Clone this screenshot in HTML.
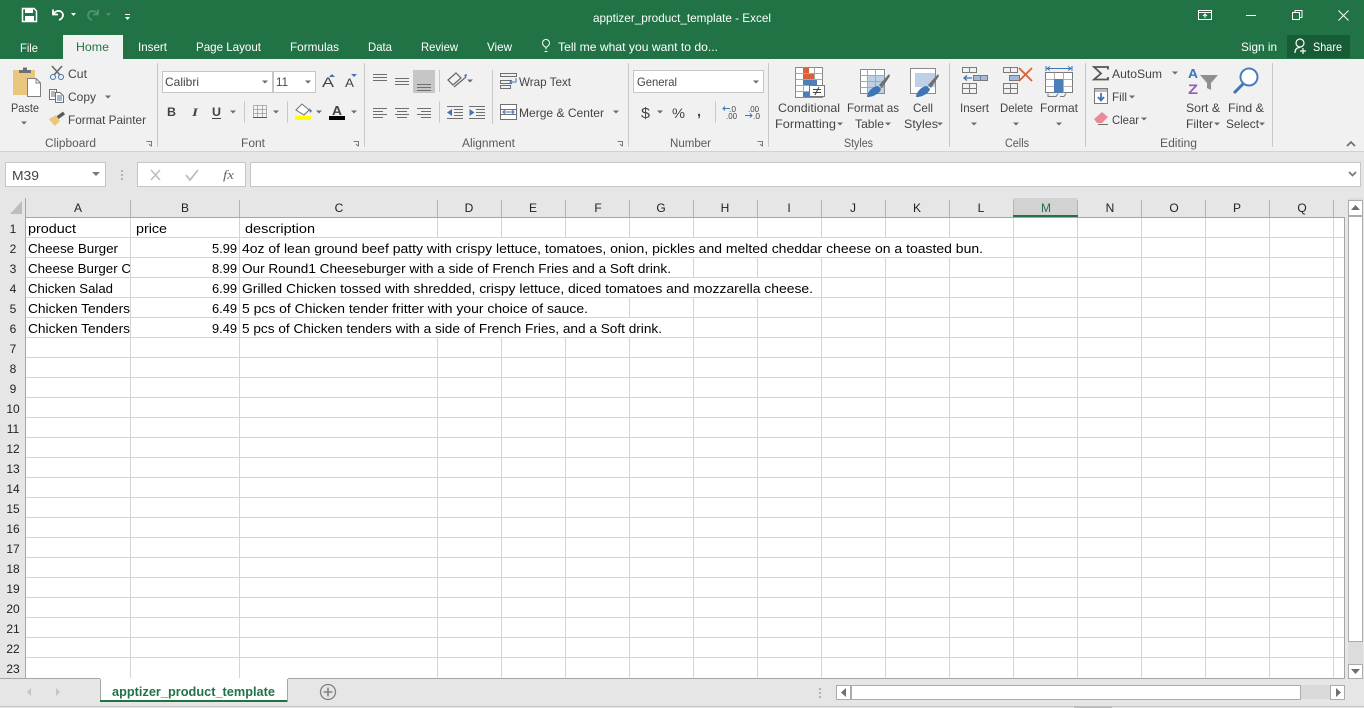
<!DOCTYPE html>
<html><head><meta charset="utf-8"><title>apptizer_product_template - Excel</title>
<style>
html,body{margin:0;padding:0;width:1364px;height:708px;overflow:hidden;background:#e6e6e6}
svg{display:block;position:absolute;left:0;top:0}
text{font-family:"Liberation Sans",sans-serif;font-size:12px;fill:#444;white-space:pre}
.w{fill:#fff}
.c{font-size:13px;fill:#000}
.h{font-size:12px;fill:#222;text-anchor:middle}
.g{font-size:11.5px;fill:#5a5a5a}
.ln{stroke:#6f6f6f;stroke-width:1;fill:none}
.bl{stroke:#3f75b3;stroke-width:1;fill:none}
</style></head><body>
<svg width="1364" height="708" viewBox="0 0 1364 708" lengthAdjust="spacingAndGlyphs">
<defs><clipPath id="colA"><rect x="26" y="218" width="104" height="120"/></clipPath>
<polygon id="ar" points="-3,-1.5 3,-1.5 0,1.5" fill="#6a6a6a"/></defs>

<!-- title bar -->
<rect width="1364" height="59" fill="#217346"/>
<rect x="63" y="35" width="60" height="24" fill="#f1f1f1"/>
<text class="w" x="593" y="22" textLength="178" lengthAdjust="spacingAndGlyphs">apptizer_product_template - Excel</text>
<path d="M22.500 8.500H34l2.500 2.500V21.500H22.500Z" fill="none" stroke="#fff" stroke-width="1.500"/><rect x="25" y="8.500" width="8" height="4.500" fill="#fff"/><rect x="25" y="16" width="9" height="5" fill="#fff"/>
<path d="M53 9.500V14.500H58M53.500 14C55.500 10.500 60 10 62 12.500C64 15 63 18.500 59 20" fill="none" stroke="#fff" stroke-width="1.800"/>
<polygon points="71,13 76,13 73.500,16" fill="#fff"/>
<path d="M98 9.500V14.500H93M97.500 14C95.500 10.500 91 10 89 12.500C87 15 88 18.500 92 20" fill="none" stroke="#4f9270" stroke-width="1.800"/>
<polygon points="106,13 111,13 108.500,16" fill="#4f9270"/>
<path d="M125 14.500H130" stroke="#fff"/><polygon points="125,17 130,17 127.500,20" fill="#fff"/>
<g fill="none" stroke="#fff"><rect x="1198.500" y="10.500" width="13" height="9"/><path d="M1198.500 12.500H1211.500M1205 18V14M1203 16L1205 14L1207 16"/>
<path d="M1246 15.500H1256" stroke-width="1"/>
<rect x="1292.500" y="12.500" width="7" height="7"/><path d="M1295 12V10.500H1302V17.500H1300"/>
<path d="M1338.500 10.500L1348.500 20.500M1348.500 10.500L1338.500 20.500"/></g>

<text class="w" x="20" y="52" textLength="18" lengthAdjust="spacingAndGlyphs">File</text>
<text x="76" y="51" textLength="33" lengthAdjust="spacingAndGlyphs" style="fill:#217346">Home</text>
<text class="w" x="138" y="51" textLength="29" lengthAdjust="spacingAndGlyphs">Insert</text>
<text class="w" x="196" y="51" textLength="65" lengthAdjust="spacingAndGlyphs">Page Layout</text>
<text class="w" x="290" y="51" textLength="49" lengthAdjust="spacingAndGlyphs">Formulas</text>
<text class="w" x="368" y="51" textLength="24" lengthAdjust="spacingAndGlyphs">Data</text>
<text class="w" x="421" y="51" textLength="37" lengthAdjust="spacingAndGlyphs">Review</text>
<text class="w" x="487" y="51" textLength="25" lengthAdjust="spacingAndGlyphs">View</text>
<path d="M546 49.500V47.500C543.500 46 542.500 44.500 542.500 43C542.500 40.500 544.500 39.500 546 39.500C547.500 39.500 549.500 40.500 549.500 43C549.500 44.500 548.500 46 546 47.500M544.500 51.500H547.500" fill="none" stroke="#fff"/>
<text class="w" x="558" y="51" textLength="160" lengthAdjust="spacingAndGlyphs">Tell me what you want to do...</text>
<text class="w" x="1241" y="51" textLength="36" lengthAdjust="spacingAndGlyphs">Sign in</text>
<rect x="1287" y="35" width="63" height="23" fill="#185c37"/>
<circle cx="1300" cy="43" r="4" fill="none" stroke="#fff" stroke-width="1.200"/><path d="M1295 53C1295 49 1297 47.500 1300 47.500M1300 51H1306M1303 48V54" fill="none" stroke="#fff" stroke-width="1.200"/>
<text class="w" x="1313" y="51" textLength="29" lengthAdjust="spacingAndGlyphs">Share</text>

<!-- ribbon -->
<rect y="59" width="1364" height="92" fill="#f1f1f1"/>
<rect y="151" width="1364" height="1" fill="#d2d2d2"/>
<g fill="#c9c9c9"><rect x="157" y="63" width="1" height="84"/><rect x="364" y="63" width="1" height="84"/><rect x="628" y="63" width="1" height="84"/><rect x="768" y="63" width="1" height="84"/><rect x="949" y="63" width="1" height="84"/><rect x="1085" y="63" width="1" height="84"/><rect x="1272" y="63" width="1" height="84"/></g>
<g class="g">
<text class="g" x="45" y="147" textLength="51" lengthAdjust="spacingAndGlyphs">Clipboard</text>
<text class="g" x="241" y="147" textLength="24" lengthAdjust="spacingAndGlyphs">Font</text>
<text class="g" x="462" y="147" textLength="53" lengthAdjust="spacingAndGlyphs">Alignment</text>
<text class="g" x="670" y="147" textLength="41" lengthAdjust="spacingAndGlyphs">Number</text>
<text class="g" x="844" y="147" textLength="29" lengthAdjust="spacingAndGlyphs">Styles</text>
<text class="g" x="1005" y="147" textLength="24" lengthAdjust="spacingAndGlyphs">Cells</text>
<text class="g" x="1160" y="147" textLength="37" lengthAdjust="spacingAndGlyphs">Editing</text>
</g>
<g fill="none" stroke="#7a7a7a"><path id="dl" d="M146.500 141.500H151.500V146.500M149 144L151 146"/><path d="M353.500 141.500H358.500V146.500M356 144L358 146"/><path d="M617.500 141.500H622.500V146.500M620 144L622 146"/><path d="M757.500 141.500H762.500V146.500M760 144L762 146"/></g>
<path d="M1347 146L1351 142L1355 146" fill="none" stroke="#6a6a6a" stroke-width="1.600"/>

<!-- clipboard -->
<rect x="13" y="70" width="22" height="25" fill="#eac77f"/>
<path d="M19 73V70H23V67.500H27V70H31V73Z" fill="#6f6f6f"/>
<path d="M27.500 78.500H36L40.500 83V96.500H27.500Z" fill="#fff" stroke="#7f7f7f"/><path d="M36 78.500V83H40.500" fill="none" stroke="#7f7f7f"/>
<text x="11" y="112" textLength="28" lengthAdjust="spacingAndGlyphs">Paste</text>
<use href="#ar" x="24" y="123"/>
<path d="M52 66L60 75M62 66L54 75" stroke="#6a6a6a" stroke-width="1.600"/><circle cx="53" cy="77" r="2.500" class="bl" stroke-width="1.300"/><circle cx="61" cy="77" r="2.500" class="bl" stroke-width="1.300"/>
<text x="68" y="78" textLength="19" lengthAdjust="spacingAndGlyphs">Cut</text>
<rect x="49.500" y="89.500" width="7" height="10" fill="#fff" stroke="#6f6f6f"/><path d="M51 92H55M51 94H55M51 96H55" stroke="#6f6f6f"/><path d="M55.500 92.500H60L63.500 96V102.500H55.500Z" fill="#fff" stroke="#6f6f6f"/><path d="M57 96H62M57 98H62M57 100H62" stroke="#3f75b3"/>
<text x="68" y="101" textLength="28" lengthAdjust="spacingAndGlyphs">Copy</text>
<use href="#ar" x="108" y="97"/>
<path d="M57 118L64 113" stroke="#5a5a5a" stroke-width="3.500"/><path d="M49 119L56 115L60 121L55 126C53 124 51 122 49 119Z" fill="#eac77f"/>
<text x="68" y="124" textLength="78" lengthAdjust="spacingAndGlyphs">Format Painter</text>

<!-- font -->
<rect x="162.500" y="71.500" width="110" height="21" fill="#fff" stroke="#c6c6c6"/><rect x="273.500" y="71.500" width="42" height="21" fill="#fff" stroke="#c6c6c6"/>
<text x="165" y="86" textLength="34" lengthAdjust="spacingAndGlyphs">Calibri</text>
<text x="276" y="86" textLength="12" lengthAdjust="spacingAndGlyphs">11</text>
<use href="#ar" x="265" y="82"/><use href="#ar" x="308" y="82"/>
<text x="322" y="87" textLength="12" lengthAdjust="spacingAndGlyphs" style="font-size:14px">A</text><polygon points="329,77 335,77 332,74" fill="#3f75b3"/>
<text x="345" y="87" textLength="9" lengthAdjust="spacingAndGlyphs" style="font-size:12px">A</text><polygon points="351,74 357,74 354,77" fill="#3f75b3"/>
<text x="167" y="116" style="font-weight:bold;font-size:12px" textLength="9" lengthAdjust="spacingAndGlyphs">B</text>
<text x="192" y="116" style="font-style:italic;font-size:12px;font-family:'Liberation Serif',serif;font-weight:bold" textLength="6" lengthAdjust="spacingAndGlyphs">I</text>
<text x="212" y="116" style="font-weight:bold;font-size:12px" textLength="9" lengthAdjust="spacingAndGlyphs">U</text><rect x="212" y="118" width="9" height="1" fill="#444"/>
<use href="#ar" x="233" y="112"/><rect x="244" y="101" width="1" height="22" fill="#c9c9c9"/>
<path d="M253.500 105.500H266.500V117.500H253.500ZM253.500 109.500H266.500M253.500 113.500H266.500M257.500 105.500V117.500M262.500 105.500V117.500" fill="none" stroke="#777" stroke-dasharray="1 1"/><rect x="253" y="117" width="14" height="1" fill="#555"/>
<use href="#ar" x="276" y="112"/><rect x="287" y="101" width="1" height="22" fill="#c9c9c9"/>
<path d="M296 110L302 104L309 110L304 115Z" fill="#fff" stroke="#6f6f6f"/><path d="M309 108L312 111L310 113Z" fill="#3f75b3"/>
<rect x="295" y="116" width="16" height="4" fill="#ff0"/><use href="#ar" x="319" y="112"/>
<text x="332" y="115" style="font-size:13px;font-weight:bold" textLength="10" lengthAdjust="spacingAndGlyphs">A</text>
<rect x="329" y="116" width="16" height="4" fill="#000"/><use href="#ar" x="354" y="112"/>

<!-- alignment -->
<rect x="413" y="70" width="22" height="23" fill="#c6c6c6"/>
<path class="ln" d="M373 74.500H387M373 77.500H387M373 80.500H387M395 78.500H409M395 81.500H409M395 84.500H409M417 84.500H431M417 87.500H431M417 90.500H431"/>
<rect x="439" y="70" width="1" height="22" fill="#c9c9c9"/>
<path d="M448 80L456 73L461 78L453 85ZM454 87L466 77" fill="none" stroke="#666" stroke-width="1.200"/><polygon points="464,75 467,74 466,78" fill="#3f75b3"/><use href="#ar" x="470" y="81"/>
<rect x="492" y="70" width="1" height="54" fill="#c9c9c9"/>
<path d="M500.500 73.500H516.500V76.500H500.500ZM500.500 80.500H510.500V83.500H500.500ZM500.500 85.500H510.500V88.500H500.500Z" fill="none" stroke="#6f6f6f"/><path d="M516 78V82H510M512 80L510 82L512 84" fill="none" stroke="#3f75b3"/>
<text x="519" y="86" textLength="52" lengthAdjust="spacingAndGlyphs">Wrap Text</text>
<path class="ln" d="M373 108.500H387M373 111.500H383M373 114.500H387M373 117.500H383M395 108.500H409M397 111.500H407M395 114.500H409M397 117.500H407M417 108.500H431M421 111.500H431M417 114.500H431M421 117.500H431"/>
<rect x="439" y="101" width="1" height="22" fill="#c9c9c9"/>
<path class="ln" d="M447 106.500H463M454 109.500H463M454 112.500H463M454 115.500H463M447 118.500H463M469 106.500H485M476 109.500H485M476 112.500H485M476 115.500H485M469 118.500H485"/>
<path d="M447 112.500L452 109V116Z M474.500 112.500L469.500 109V116Z" fill="#3f75b3"/>
<rect x="500.500" y="104.500" width="16" height="15" fill="#fff" stroke="#6f6f6f"/><path d="M500.500 109.500H516.500M500.500 114.500H516.500" stroke="#6f6f6f"/><rect x="501" y="110" width="15" height="4" fill="#fff"/><path d="M503 112H514M505 110L503 112L505 114M512 110L514 112L512 114" fill="none" stroke="#3f75b3"/>
<text x="519" y="117" textLength="85" lengthAdjust="spacingAndGlyphs">Merge &amp; Center</text>
<use href="#ar" x="616" y="112"/>

<!-- number -->
<rect x="633.500" y="70.500" width="130" height="22" fill="#fff" stroke="#c6c6c6"/>
<text x="637" y="86" textLength="40" lengthAdjust="spacingAndGlyphs">General</text><use href="#ar" x="756" y="82"/>
<text x="641" y="118" style="font-size:15px" textLength="9" lengthAdjust="spacingAndGlyphs">$</text><use href="#ar" x="660" y="112"/>
<text x="672" y="118" style="font-size:14px" textLength="13" lengthAdjust="spacingAndGlyphs">%</text>
<text x="697" y="116" style="font-size:14px;font-weight:bold" textLength="4" lengthAdjust="spacingAndGlyphs">,</text>
<rect x="715" y="101" width="1" height="22" fill="#c9c9c9"/>
<text x="729" y="112" style="font-size:8px" textLength="7" lengthAdjust="spacingAndGlyphs">.0</text><text x="726" y="119" style="font-size:8px" textLength="11" lengthAdjust="spacingAndGlyphs">.00</text>
<path d="M730 108.500H723M725 106.500L723 108.500L725 110.500" fill="none" stroke="#3f75b3"/>
<text x="748" y="112" style="font-size:8px" textLength="11" lengthAdjust="spacingAndGlyphs">.00</text><text x="753" y="119" style="font-size:8px" textLength="7" lengthAdjust="spacingAndGlyphs">.0</text>
<path d="M745 115.500H752M750 113.500L752 115.500L750 117.500" fill="none" stroke="#3f75b3"/>

<!-- styles -->
<g>
<rect x="795.500" y="67.500" width="27" height="30" fill="#fff" stroke="#8a8a8a"/><path d="M795.500 73.500H822.500M795.500 79.500H822.500M795.500 85.500H822.500M795.500 91.500H822.500M803.500 67.500V97.500M814.500 67.500V97.500" stroke="#a8a8a8"/>
<rect x="803" y="68" width="6" height="5" fill="#d8603b"/><rect x="803" y="74" width="11" height="5" fill="#d8603b"/><rect x="803" y="80" width="14" height="5" fill="#4a7fba"/><rect x="803" y="92" width="8" height="5" fill="#4a7fba"/>
<rect x="809.500" y="85.500" width="15" height="11" fill="#fff" stroke="#777"/><path d="M813 89.500H821M813 92.500H821M815 95L819 87" stroke="#444" fill="none"/>
<rect x="860.500" y="69.500" width="24" height="24" fill="#fff" stroke="#8a8a8a"/><rect x="867" y="75" width="17" height="18" fill="#bdd0e6"/><path d="M860.500 75.500H884.500M860.500 81.500H884.500M860.500 87.500H884.500M867.500 69.500V93.500M875.500 69.500V93.500" stroke="#a8a8a8"/>
<path d="M879 85L889 74L890 76L882 88Z" fill="#6f6f6f"/><path d="M867 97C867 92 873 86 878 86L881 89C880 93 874 97 867 97Z" fill="#3f75b3"/>
<rect x="910.500" y="68.500" width="25" height="25" fill="#fff" stroke="#8a8a8a"/><rect x="915" y="73" width="20" height="14" fill="#bdd0e6"/>
<path d="M928 85L938 74L939 76L931 88Z" fill="#6f6f6f"/><path d="M916 97C916 92 922 86 927 86L930 89C929 93 923 97 916 97Z" fill="#3f75b3"/>
</g>
<text x="778" y="112" textLength="62" lengthAdjust="spacingAndGlyphs">Conditional</text>
<text x="775" y="128" textLength="61" lengthAdjust="spacingAndGlyphs">Formatting</text><use href="#ar" x="840" y="124"/>
<text x="847" y="112" textLength="52" lengthAdjust="spacingAndGlyphs">Format as</text>
<text x="855" y="128" textLength="29" lengthAdjust="spacingAndGlyphs">Table</text><use href="#ar" x="888" y="124"/>
<text x="913" y="112" textLength="20" lengthAdjust="spacingAndGlyphs">Cell</text>
<text x="904" y="128" textLength="34" lengthAdjust="spacingAndGlyphs">Styles</text><use href="#ar" x="940" y="124"/>

<!-- cells -->
<g fill="none" stroke="#7a7a7a">
<path d="M962.500 67.500H976.500V72.500H962.500ZM969.500 67.500V72.500M962.500 83.500H976.500V93.500H962.500ZM962.500 88.500H976.500M969.500 83.500V93.500"/>
<rect x="973.500" y="75.500" width="14" height="5" fill="#9fbcdc" stroke="#7a7a7a"/><path d="M980.500 75.500V80.500"/>
<path d="M1003.500 67.500H1017.500V72.500H1003.500ZM1010.500 67.500V72.500M1003.500 83.500H1017.500V93.500H1003.500ZM1003.500 88.500H1017.500M1010.500 83.500V93.500"/>
<rect x="1009.500" y="75.500" width="10" height="5" fill="#9fbcdc"/>
<rect x="1045.500" y="72.500" width="27" height="20" fill="#fff"/><path d="M1045.500 79.500H1072.500M1045.500 86.500H1072.500M1054.500 72.500V92.500M1063.500 72.500V92.500" stroke="#b0b0b0"/>
<path d="M1048 93.500V96.500H1056L1058 93.500M1060 96.500H1064L1066 93.500"/>
</g>
<path d="M972 78H964M967 75.500L964 78L967 80.500" fill="none" stroke="#3f75b3" stroke-width="1.300"/>
<path d="M1019 68L1032 81M1032 68L1019 81" stroke="#d8603b" stroke-width="1.800"/>
<rect x="1054" y="79" width="9" height="14" fill="#4a7fba"/>
<path d="M1046 68.500H1072M1046 66V71M1072 66V71M1050 66.500L1047 68.500L1050 70.500M1068 66.500L1071 68.500L1068 70.500" fill="none" stroke="#3f75b3"/>
<text x="960" y="112" textLength="29" lengthAdjust="spacingAndGlyphs">Insert</text>
<text x="1000" y="112" textLength="33" lengthAdjust="spacingAndGlyphs">Delete</text>
<text x="1040" y="112" textLength="38" lengthAdjust="spacingAndGlyphs">Format</text>
<use href="#ar" x="974" y="124"/><use href="#ar" x="1016" y="124"/><use href="#ar" x="1059" y="124"/>

<!-- editing -->
<path d="M1108 69.500V67H1094L1101 73.500L1094 79.500H1108V77" fill="none" stroke="#555" stroke-width="1.800"/>
<text x="1112" y="78" textLength="50" lengthAdjust="spacingAndGlyphs">AutoSum</text><use href="#ar" x="1175" y="73"/>
<rect x="1094.500" y="88.500" width="13" height="15" fill="#fff" stroke="#7a7a7a"/><rect x="1095" y="89" width="12" height="3" fill="#bbb"/><path d="M1101 93V100M1098 97L1101 100.500L1104 97" fill="none" stroke="#3f75b3" stroke-width="1.800"/>
<text x="1112" y="101" textLength="15" lengthAdjust="spacingAndGlyphs">Fill</text><use href="#ar" x="1132" y="97"/>
<path d="M1094 119L1102 112L1108 117L1102 123H1097Z" fill="#e88a9a"/><path d="M1098 124.500H1108" stroke="#6f6f6f"/>
<text x="1112" y="124" textLength="27" lengthAdjust="spacingAndGlyphs">Clear</text><use href="#ar" x="1144" y="119"/>
<text x="1188" y="78" style="font-size:13px;fill:#3f75b3;font-weight:bold" textLength="10" lengthAdjust="spacingAndGlyphs">A</text>
<text x="1188" y="94" style="font-size:14px;fill:#8e5fb5;font-weight:bold" textLength="10" lengthAdjust="spacingAndGlyphs">Z</text>
<path d="M1200 75H1218L1211 83V90L1207 88V83Z" fill="#8f8f8f"/>
<circle cx="1249" cy="77" r="8.500" fill="#fff" stroke="#4a7fba" stroke-width="2"/><path d="M1243 84L1234 93" stroke="#3f75b3" stroke-width="3"/>
<text x="1186" y="112" textLength="34" lengthAdjust="spacingAndGlyphs">Sort &amp;</text>
<text x="1186" y="128" textLength="27" lengthAdjust="spacingAndGlyphs">Filter</text><use href="#ar" x="1217" y="124"/>
<text x="1228" y="112" textLength="36" lengthAdjust="spacingAndGlyphs">Find &amp;</text>
<text x="1226" y="128" textLength="33" lengthAdjust="spacingAndGlyphs">Select</text><use href="#ar" x="1262" y="124"/>

<!-- formula bar -->
<rect x="5.500" y="162.500" width="100" height="24" fill="#fff" stroke="#c6c6c6"/>
<text x="12" y="180" textLength="27" lengthAdjust="spacingAndGlyphs" style="font-size:12.500px">M39</text>
<polygon points="92,172 100,172 96,176" fill="#7a7a7a"/>
<path d="M122 170V172M122 174V176M122 178V180" stroke="#a0a0a0" stroke-width="1.500"/>
<rect x="137.500" y="162.500" width="108" height="24" fill="#fff" stroke="#c6c6c6"/>
<path d="M151 170L160 180M160 170L151 180" stroke="#bdbdbd" stroke-width="1.500"/>
<path d="M186 175L190 180L198 170" fill="none" stroke="#bdbdbd" stroke-width="1.800"/>
<text x="223" y="179" style="font-family:'Liberation Serif',serif;font-style:italic;font-size:13px;fill:#666" textLength="11" lengthAdjust="spacingAndGlyphs">fx</text>
<rect x="250.500" y="162.500" width="1110" height="24" fill="#fff" stroke="#c6c6c6"/>
<path d="M1349 172L1352.500 175.500L1356 172" fill="none" stroke="#7a7a7a" stroke-width="1.800"/>

<!-- grid -->
<rect x="26" y="218" width="1318" height="460" fill="#fff"/>
<g stroke="#d4d4d4">
<path d="M130.500 218V678M239.500 218V678M437.500 218V678M501.500 218V678M565.500 218V678M629.500 218V678M693.500 218V678M757.500 218V678M821.500 218V678M885.500 218V678M949.500 218V678M1013.500 218V678M1077.500 218V678M1141.500 218V678M1205.500 218V678M1269.500 218V678M1333.500 218V678"/>
<path d="M26 237.500H1344M26 257.500H1344M26 277.500H1344M26 297.500H1344M26 317.500H1344M26 337.500H1344M26 357.500H1344M26 377.500H1344M26 397.500H1344M26 417.500H1344M26 437.500H1344M26 457.500H1344M26 477.500H1344M26 497.500H1344M26 517.500H1344M26 537.500H1344M26 557.500H1344M26 577.500H1344M26 597.500H1344M26 617.500H1344M26 637.500H1344M26 657.500H1344"/>
</g>
<g fill="#fff"><rect x="436" y="238" width="514" height="19"/><rect x="436" y="258" width="194" height="19"/><rect x="436" y="278" width="322" height="19"/><rect x="436" y="298" width="130" height="19"/><rect x="436" y="318" width="194" height="19"/></g>
<rect x="1013" y="218" width="1" height="0" fill="#d4d4d4"/>
<!-- headers -->
<rect y="198" width="1344" height="20" fill="#e6e6e6"/>
<rect x="1013" y="198" width="64" height="17" fill="#d2d2d2"/>
<polygon points="22,201 22,214 10,214" fill="#bdbdbd"/>
<g fill="#b4b4b4"><rect x="130" y="200" width="1" height="17"/><rect x="239" y="200" width="1" height="17"/><rect x="437" y="200" width="1" height="17"/><rect x="501" y="200" width="1" height="17"/><rect x="565" y="200" width="1" height="17"/><rect x="629" y="200" width="1" height="17"/><rect x="693" y="200" width="1" height="17"/><rect x="757" y="200" width="1" height="17"/><rect x="821" y="200" width="1" height="17"/><rect x="885" y="200" width="1" height="17"/><rect x="949" y="200" width="1" height="17"/><rect x="1013" y="200" width="1" height="17"/><rect x="1077" y="200" width="1" height="17"/><rect x="1141" y="200" width="1" height="17"/><rect x="1205" y="200" width="1" height="17"/><rect x="1269" y="200" width="1" height="17"/><rect x="1333" y="200" width="1" height="17"/></g>
<rect x="26" y="217" width="1319" height="1" fill="#a6a6a6"/>
<rect x="1013" y="215" width="65" height="2" fill="#217346"/>
<rect x="25" y="198" width="1" height="480" fill="#a6a6a6"/>
<rect x="1344" y="217" width="1" height="461" fill="#a6a6a6"/>
<rect y="678" width="1345" height="1" fill="#a6a6a6"/>
<g class="h">
<text class="h" x="78" y="212">A</text><text class="h" x="185" y="212">B</text><text class="h" x="339" y="212">C</text><text class="h" x="469" y="212">D</text><text class="h" x="533" y="212">E</text><text class="h" x="598" y="212">F</text><text class="h" x="661" y="212">G</text><text class="h" x="725" y="212">H</text><text class="h" x="789" y="212">I</text><text class="h" x="853" y="212">J</text><text class="h" x="917" y="212">K</text><text class="h" x="981" y="212">L</text><text class="h" x="1046" y="212" style="fill:#217346">M</text><text class="h" x="1110" y="212">N</text><text class="h" x="1174" y="212">O</text><text class="h" x="1237" y="212">P</text><text class="h" x="1302" y="212">Q</text>
<text class="h" x="13" y="233">1</text><text class="h" x="13" y="253">2</text><text class="h" x="13" y="273">3</text><text class="h" x="13" y="293">4</text><text class="h" x="13" y="313">5</text><text class="h" x="13" y="333">6</text><text class="h" x="13" y="353">7</text><text class="h" x="13" y="373">8</text><text class="h" x="13" y="393">9</text><text class="h" x="13" y="413">10</text><text class="h" x="13" y="433">11</text><text class="h" x="13" y="453">12</text><text class="h" x="13" y="473">13</text><text class="h" x="13" y="493">14</text><text class="h" x="13" y="513">15</text><text class="h" x="13" y="533">16</text><text class="h" x="13" y="553">17</text><text class="h" x="13" y="573">18</text><text class="h" x="13" y="593">19</text><text class="h" x="13" y="613">20</text><text class="h" x="13" y="633">21</text><text class="h" x="13" y="653">22</text><text class="h" x="13" y="673">23</text>
</g>
<!-- cell text -->
<text class="c" x="28" y="233" textLength="48" lengthAdjust="spacingAndGlyphs">product</text>
<text class="c" x="136" y="233" textLength="31" lengthAdjust="spacingAndGlyphs">price</text>
<text class="c" x="245" y="233" textLength="70" lengthAdjust="spacingAndGlyphs">description</text>
<g clip-path="url(#colA)">
<text class="c" x="28" y="253" textLength="90" lengthAdjust="spacingAndGlyphs">Cheese Burger</text>
<text class="c" x="28" y="273" textLength="103" lengthAdjust="spacingAndGlyphs">Cheese Burger C</text>
<text class="c" x="28" y="293" textLength="85" lengthAdjust="spacingAndGlyphs">Chicken Salad</text>
<text class="c" x="28" y="313" textLength="102" lengthAdjust="spacingAndGlyphs">Chicken Tenders</text>
<text class="c" x="28" y="333" textLength="102" lengthAdjust="spacingAndGlyphs">Chicken Tenders</text>
</g>
<text class="c" x="212" y="253" textLength="25" lengthAdjust="spacingAndGlyphs">5.99</text>
<text class="c" x="212" y="273" textLength="25" lengthAdjust="spacingAndGlyphs">8.99</text>
<text class="c" x="212" y="293" textLength="25" lengthAdjust="spacingAndGlyphs">6.99</text>
<text class="c" x="212" y="313" textLength="25" lengthAdjust="spacingAndGlyphs">6.49</text>
<text class="c" x="212" y="333" textLength="25" lengthAdjust="spacingAndGlyphs">9.49</text>
<text class="c" x="242" y="253" textLength="741" lengthAdjust="spacingAndGlyphs">4oz of lean ground beef patty with crispy lettuce, tomatoes, onion, pickles and melted cheddar cheese on a toasted bun.</text>
<text class="c" x="242" y="273" textLength="429" lengthAdjust="spacingAndGlyphs">Our Round1 Cheeseburger with a side of French Fries and a Soft drink.</text>
<text class="c" x="242" y="293" textLength="571" lengthAdjust="spacingAndGlyphs">Grilled Chicken tossed with shredded, crispy lettuce, diced tomatoes and mozzarella cheese.</text>
<text class="c" x="242" y="313" textLength="346" lengthAdjust="spacingAndGlyphs">5 pcs of Chicken tender fritter with your choice of sauce.</text>
<text class="c" x="242" y="333" textLength="420" lengthAdjust="spacingAndGlyphs">5 pcs of Chicken tenders with a side of French Fries, and a Soft drink.</text>

<!-- vertical scrollbar -->
<rect x="1348" y="198" width="15" height="481" fill="#dcdcdc"/>
<rect x="1348.500" y="200.500" width="14" height="15" fill="#fff" stroke="#ababab"/>
<polygon points="1351,210 1360,210 1355.500,205" fill="#6f6f6f"/>
<rect x="1348.500" y="216.500" width="14" height="425" fill="#fff" stroke="#ababab"/>
<rect x="1348.500" y="664.500" width="14" height="14" fill="#fff" stroke="#ababab"/>
<polygon points="1351,669 1360,669 1355.500,674" fill="#6f6f6f"/>

<!-- sheet tabs -->
<path d="M100.500 679V701.500H287.500V679" fill="#fff" stroke="#a6a6a6"/>
<rect x="100" y="678" width="188" height="1" fill="#fff"/>
<rect x="100" y="700" width="187" height="2" fill="#217346"/>
<text x="112" y="696" textLength="163" lengthAdjust="spacingAndGlyphs" style="fill:#217346;font-weight:bold;font-size:12.500px">apptizer_product_template</text>
<polygon points="31,688 31,696 27,692" fill="#c4c4c4"/><polygon points="56,688 56,696 60,692" fill="#c4c4c4"/>
<circle cx="328" cy="692" r="7.500" fill="none" stroke="#808080" stroke-width="1.300"/><path d="M323.500 692H332.500M328 687.500V696.500" stroke="#808080" stroke-width="1.600"/>
<path d="M820 690V692M820 694V696M820 698V700" stroke="#a0a0a0" stroke-width="1.500" transform="translate(0,-2)"/>
<rect x="1301" y="685" width="30" height="14" fill="#dadada"/>
<rect x="836.500" y="685.500" width="14" height="14" fill="#fff" stroke="#ababab"/>
<polygon points="846,688 846,697 841,692.500" fill="#6f6f6f"/>
<rect x="851.500" y="685.500" width="449" height="14" fill="#fff" stroke="#ababab"/>
<rect x="1330.500" y="685.500" width="14" height="14" fill="#fff" stroke="#ababab"/>
<polygon points="1336,688 1336,697 1341,692.500" fill="#6f6f6f"/>
<rect y="706" width="1364" height="1" fill="#c6c6c6"/>
<rect y="707" width="1364" height="1" fill="#e6e6e6"/>
<rect x="1074" y="706" width="38" height="2" fill="#bdbdbd"/>
</svg>
</body></html>
